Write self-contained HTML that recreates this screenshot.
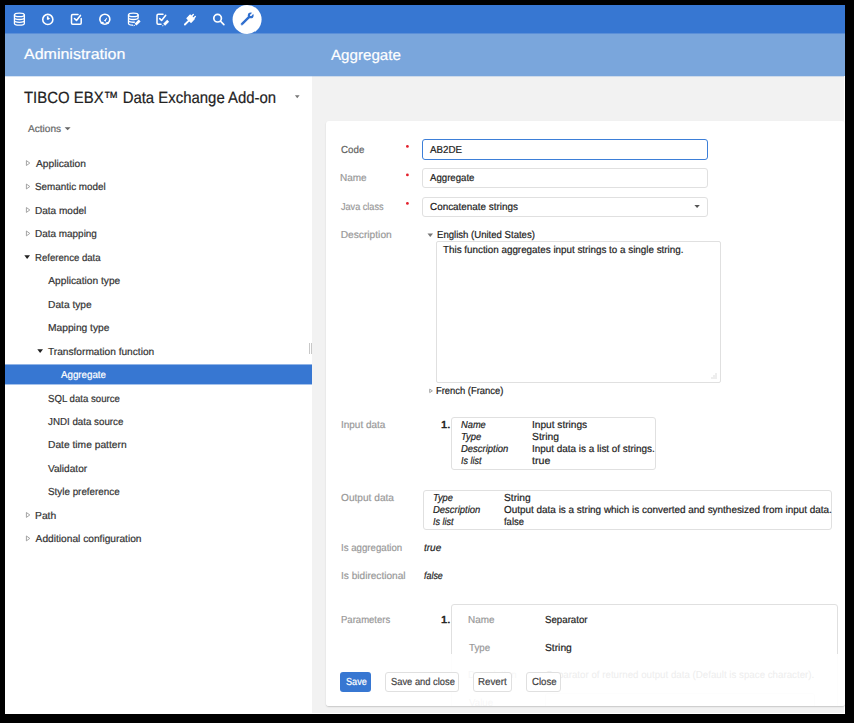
<!DOCTYPE html>
<html><head><meta charset="utf-8"><style>
*{box-sizing:border-box}
html,body{margin:0;padding:0;background:#000;width:854px;height:723px;overflow:hidden;font-family:"Liberation Sans",sans-serif}
.a{position:absolute}
.t{position:absolute;white-space:nowrap;transform-origin:0 0;-webkit-text-stroke:0.2px currentColor;text-rendering:geometricPrecision}
.box{position:absolute;border:1px solid #e0e0e0;border-radius:3px;background:#fff}
.btn{position:absolute;border:1px solid #e0e0e0;border-radius:3px;background:#fff}
</style></head><body>
<div class="a" style="left:5px;top:5px;width:840px;height:29px;background:#3777d2"></div>
<div class="a" style="left:5px;top:33px;width:840px;height:43px;background:#7aa6dc"></div>
<div class="a" style="left:5px;top:33px;width:840px;height:1px;background:#5b8fd8"></div>
<div class="a" style="left:5px;top:76px;width:307px;height:638px;background:#fff"></div>
<div class="a" style="left:312px;top:76px;width:533px;height:638px;background:#f2f2f2"></div>
<div class="a" style="left:5px;top:76px;width:840px;height:1px;background:rgba(122,166,220,.3)"></div>
<div class="a" style="left:844px;top:76px;width:1px;height:638px;background:#fff"></div>
<div class="a" style="left:5px;top:713px;width:840px;height:1px;background:#fff"></div>
<div class="a" style="left:326px;top:121px;width:519px;height:585px;background:#fff;border-radius:3px;box-shadow:0 1px 1.5px rgba(0,0,0,.18)"></div>
<div class="a" style="left:5px;top:365px;width:307px;height:19px;background:#3777d2"></div>
<div class="a" style="left:5px;top:364px;width:307px;height:1px;background:rgba(55,119,210,.55)"></div>
<div class="a" style="left:5px;top:384px;width:307px;height:1px;background:rgba(55,119,210,.45)"></div>
<div class="a" style="left:309px;top:343px;width:1px;height:11px;background:#c8c8c8"></div>
<div class="a" style="left:311px;top:343px;width:1px;height:11px;background:#c8c8c8"></div>
<div class="box" style="left:422px;top:139px;width:286px;height:21px;border:1.5px solid #3d7fd8"></div>
<div class="box" style="left:422px;top:168px;width:286px;height:20px"></div>
<div class="box" style="left:422px;top:197px;width:286px;height:20px"></div>
<div class="box" style="left:436px;top:241px;width:285px;height:142px;border-radius:2px"></div>
<div class="box" style="left:451px;top:417px;width:205px;height:53px"></div>
<div class="box" style="left:423px;top:490px;width:409px;height:40px"></div>
<div class="t" style="left:24.20px;top:48px;font-size:14.9px;line-height:14.9px;color:#fff;transform:scaleX(1.0749)">Administration</div>
<div class="t" style="left:330.70px;top:49px;font-size:14.9px;line-height:14.9px;color:#fff;transform:scaleX(1.0168)">Aggregate</div>
<div class="t" style="left:24.27px;top:90px;font-size:16.3px;line-height:16.3px;color:#222;transform:scaleX(0.9164)">TIBCO EBX™ Data Exchange Add-on</div>
<div class="t" style="left:27.70px;top:125px;font-size:10px;line-height:10px;color:#666;transform:scaleX(1.0092)">Actions</div>
<div class="t" style="left:35.60px;top:160px;font-size:10.2px;line-height:10.2px;color:#333;transform:scaleX(1.0030)">Application</div>
<div class="t" style="left:35.12px;top:183px;font-size:10.2px;line-height:10.2px;color:#333;transform:scaleX(0.9681)">Semantic model</div>
<div class="t" style="left:35.36px;top:207px;font-size:10.2px;line-height:10.2px;color:#333;transform:scaleX(0.9852)">Data model</div>
<div class="t" style="left:35.37px;top:230px;font-size:10.2px;line-height:10.2px;color:#333;transform:scaleX(0.9758)">Data mapping</div>
<div class="t" style="left:34.89px;top:254px;font-size:10.2px;line-height:10.2px;color:#333;transform:scaleX(0.9420)">Reference data</div>
<div class="t" style="left:48.30px;top:277px;font-size:10.2px;line-height:10.2px;color:#333">Application type</div>
<div class="t" style="left:48.05px;top:301px;font-size:10.2px;line-height:10.2px;color:#333">Data type</div>
<div class="t" style="left:47.55px;top:324px;font-size:10.2px;line-height:10.2px;color:#333;transform:scaleX(1.0050)">Mapping type</div>
<div class="t" style="left:48.05px;top:348px;font-size:10.2px;line-height:10.2px;color:#333;transform:scaleX(0.9957)">Transformation function</div>
<div class="t" style="left:61.30px;top:371px;font-size:10.2px;line-height:10.2px;color:#fff;transform:scaleX(0.9561)">Aggregate</div>
<div class="t" style="left:47.83px;top:395px;font-size:10.2px;line-height:10.2px;color:#333;transform:scaleX(0.9462)">SQL data source</div>
<div class="t" style="left:48.30px;top:418px;font-size:10.2px;line-height:10.2px;color:#333;transform:scaleX(0.9580)">JNDI data source</div>
<div class="t" style="left:48.05px;top:441px;font-size:10.2px;line-height:10.2px;color:#333;transform:scaleX(1.0059)">Date time pattern</div>
<div class="t" style="left:48.30px;top:465px;font-size:10.2px;line-height:10.2px;color:#333;transform:scaleX(0.9924)">Validator</div>
<div class="t" style="left:47.82px;top:488px;font-size:10.2px;line-height:10.2px;color:#333;transform:scaleX(0.9666)">Style preference</div>
<div class="t" style="left:34.84px;top:512px;font-size:10.2px;line-height:10.2px;color:#333;transform:scaleX(1.0127)">Path</div>
<div class="t" style="left:35.60px;top:535px;font-size:10.2px;line-height:10.2px;color:#333">Additional configuration</div>
<div class="t" style="left:340.52px;top:146px;font-size:10.2px;line-height:10.2px;color:#666;transform:scaleX(0.9574)">Code</div>
<div class="t" style="left:340.26px;top:174px;font-size:10.2px;line-height:10.2px;color:#999;transform:scaleX(0.9808)">Name</div>
<div class="t" style="left:341.00px;top:203px;font-size:10.2px;line-height:10.2px;color:#999;transform:scaleX(0.8931)">Java class</div>
<div class="t" style="left:340.75px;top:231px;font-size:10.2px;line-height:10.2px;color:#999">Description</div>
<div class="t" style="left:340.77px;top:421px;font-size:10.2px;line-height:10.2px;color:#999;transform:scaleX(0.9788)">Input data</div>
<div class="t" style="left:340.80px;top:494px;font-size:10.2px;line-height:10.2px;color:#999;transform:scaleX(0.9953)">Output data</div>
<div class="t" style="left:340.59px;top:544px;font-size:10.2px;line-height:10.2px;color:#999;transform:scaleX(0.9486)">Is aggregation</div>
<div class="t" style="left:340.56px;top:572px;font-size:10.2px;line-height:10.2px;color:#999;transform:scaleX(0.9914)">Is bidirectional</div>
<div class="t" style="left:340.80px;top:616px;font-size:10.2px;line-height:10.2px;color:#999;transform:scaleX(0.9353)">Parameters</div>
<div class="t" style="left:430.30px;top:146px;font-size:10.2px;line-height:10.2px;color:#222;transform:scaleX(0.9576)">AB2DE</div>
<div class="t" style="left:430.30px;top:174px;font-size:10.2px;line-height:10.2px;color:#222;transform:scaleX(0.9455)">Aggregate</div>
<div class="t" style="left:429.81px;top:203px;font-size:10.2px;line-height:10.2px;color:#222;transform:scaleX(0.9705)">Concatenate strings</div>
<div class="t" style="left:437.00px;top:231px;font-size:10.2px;line-height:10.2px;color:#222;transform:scaleX(0.9398)">English (United States)</div>
<div class="t" style="left:443.46px;top:246px;font-size:10.2px;line-height:10.2px;color:#222;transform:scaleX(0.9649)">This function aggregates input strings to a single string.</div>
<div class="t" style="left:436.21px;top:387px;font-size:10.2px;line-height:10.2px;color:#222;transform:scaleX(0.9226)">French (France)</div>
<div class="t" style="left:441.19px;top:421px;font-size:10.2px;line-height:10.2px;color:#222;-webkit-text-stroke:0.55px currentColor;transform:scaleX(1.0857)">1.</div>
<div class="t" style="left:461.27px;top:421px;font-size:10.2px;line-height:10.2px;color:#222;font-style:italic;transform:scaleX(0.9121)">Name</div>
<div class="t" style="left:532.25px;top:421px;font-size:10.2px;line-height:10.2px;color:#222;transform:scaleX(0.9945)">Input strings</div>
<div class="t" style="left:460.81px;top:433px;font-size:10.2px;line-height:10.2px;color:#222;font-style:italic;transform:scaleX(0.9238)">Type</div>
<div class="t" style="left:531.99px;top:433px;font-size:10.2px;line-height:10.2px;color:#222;transform:scaleX(1.0118)">String</div>
<div class="t" style="left:461.27px;top:445px;font-size:10.2px;line-height:10.2px;color:#222;font-style:italic;transform:scaleX(0.9274)">Description</div>
<div class="t" style="left:532.27px;top:445px;font-size:10.2px;line-height:10.2px;color:#222;transform:scaleX(0.9723)">Input data is a list of strings.</div>
<div class="t" style="left:461.28px;top:457px;font-size:10.2px;line-height:10.2px;color:#222;font-style:italic;transform:scaleX(0.8774)">Is list</div>
<div class="t" style="left:532.30px;top:457px;font-size:10.2px;line-height:10.2px;color:#222;transform:scaleX(1.0435)">true</div>
<div class="t" style="left:432.72px;top:494px;font-size:10.2px;line-height:10.2px;color:#222;font-style:italic;transform:scaleX(0.9095)">Type</div>
<div class="t" style="left:503.70px;top:494px;font-size:10.2px;line-height:10.2px;color:#222;transform:scaleX(1.0039)">String</div>
<div class="t" style="left:433.17px;top:506px;font-size:10.2px;line-height:10.2px;color:#222;font-style:italic;transform:scaleX(0.9274)">Description</div>
<div class="t" style="left:503.71px;top:506px;font-size:10.2px;line-height:10.2px;color:#222;transform:scaleX(0.9746)">Output data is a string which is converted and synthesized from input data.</div>
<div class="t" style="left:433.18px;top:518px;font-size:10.2px;line-height:10.2px;color:#222;font-style:italic;transform:scaleX(0.8817)">Is list</div>
<div class="t" style="left:504.20px;top:518px;font-size:10.2px;line-height:10.2px;color:#222;transform:scaleX(0.9271)">false</div>
<div class="t" style="left:423.51px;top:544px;font-size:10.2px;line-height:10.2px;color:#222;font-style:italic;transform:scaleX(0.9791)">true</div>
<div class="t" style="left:423.78px;top:572px;font-size:10.2px;line-height:10.2px;color:#222;font-style:italic;transform:scaleX(0.8714)">false</div>
<div class="t" style="left:440.98px;top:616px;font-size:10.2px;line-height:10.2px;color:#222;-webkit-text-stroke:0.55px currentColor;transform:scaleX(1.1000)">1.</div>
<div class="a" style="left:0;top:0;width:854px;height:723px;clip-path:inset(0 0 17px 0)">
<div class="box" style="left:451px;top:604px;width:387px;height:130px"></div>
<div class="box" style="left:545px;top:693px;width:270px;height:20px"></div>
<div class="t" style="left:468.17px;top:616px;font-size:10.2px;line-height:10.2px;color:#999;transform:scaleX(0.9731)">Name</div>
<div class="t" style="left:545.22px;top:616px;font-size:10.2px;line-height:10.2px;color:#222;transform:scaleX(0.9514)">Separator</div>
<div class="t" style="left:468.66px;top:644px;font-size:10.2px;line-height:10.2px;color:#999;transform:scaleX(0.9581)">Type</div>
<div class="t" style="left:545.20px;top:644px;font-size:10.2px;line-height:10.2px;color:#222;transform:scaleX(1.0078)">String</div>
<div class="t" style="left:467.98px;top:671px;font-size:10.2px;line-height:10.2px;color:#999;transform:scaleX(0.9550)">Description</div>
<div class="t" style="left:545.92px;top:671px;font-size:10.2px;line-height:10.2px;color:#222;transform:scaleX(0.9550)">Separator of returned output data (Default is space character).</div>
<div class="t" style="left:468.70px;top:699px;font-size:10.2px;line-height:10.2px;color:#999;transform:scaleX(0.9550)">Value</div>
</div>
<svg class="a" style="left:0;top:0" width="854" height="723" viewBox="0 0 854 723">
<g fill="none" stroke="#fff" stroke-width="1.35" stroke-linecap="round" stroke-linejoin="round">
<ellipse cx="19.4" cy="14.9" rx="4.95" ry="1.8"/>
<path d="M14.45 14.9V23.4A4.95 1.8 0 0 0 24.35 23.4V14.9M14.45 17.7A4.95 1.8 0 0 0 24.35 17.7M14.45 20.5A4.95 1.8 0 0 0 24.35 20.5"/>
<circle cx="47.8" cy="19.45" r="5.05" stroke-width="1.6"/>
<path d="M78 14.5H72.7Q71.5 14.5 71.5 15.7V23Q71.5 24.2 72.7 24.2H80Q81.2 24.2 81.2 23V18.4" stroke-width="1.5"/>
<path d="M74.5 18.5L76.5 20.5L80.4 15.4" stroke-width="1.6"/>
<circle cx="104.85" cy="19.2" r="5.0" stroke-width="1.6"/>
<path d="M101.3 23.1Q102.6 22.2 103.2 22.9M106.4 22.9Q107.1 22.2 108.4 23.1" stroke-width="1.4"/>
<ellipse cx="133.3" cy="14.9" rx="4.8" ry="1.8"/>
<path d="M128.5 14.9V23.4A4.8 1.8 0 0 0 132.5 25.2M138.1 14.9V18M128.5 17.7A4.8 1.8 0 0 0 138.1 17.7M128.5 20.5A4.8 1.8 0 0 0 134.5 22.2"/>
<path d="M163 14.35H158.2Q157 14.35 157 15.55V23Q157 24.2 158.2 24.2H161" stroke-width="1.5"/>
<path d="M159.7 18.6L161.6 20.45L165.7 15.35" stroke-width="1.6"/>
<path d="M184.9 24.5L189.1 20.3" stroke-width="1.9"/>
<path d="M191.5 16.4L193.3 14.6M193.5 18.4L195.3 16.6" stroke-width="1.4"/>
<circle cx="217.6" cy="18.2" r="3.8" stroke-width="1.7"/>
<path d="M220.7 21.4L223.9 24.6" stroke-width="1.6"/>
</g>
<g fill="#fff">
<path d="M46.9 16.2H48.3L48.8 17.9L50.3 18.5L48.4 19.8H46.9Z"/>
<path d="M105.08 22.58L107.11 18.04L106.69 17.76L103.32 21.42A1.05 1.05 0 0 1 105.08 22.58Z"/>
<path d="M134.6 23.7L138.7 19.6L140.6 21.5L136.5 25.6Z M133.3 26.2L134.1 24.8L135.2 25.8Z"/>
<path d="M163.2 23.8L167.2 19.8L169.1 21.7L165.1 25.7Z M162 26.3L162.7 24.9L163.8 25.9Z"/>
<path d="M186.9 18.4L190.2 15.0L194.3 18.9L191 22.4Z" stroke="#fff" stroke-width="1.1" stroke-linejoin="round"/>
<circle cx="247.1" cy="19.4" r="14.5"/>
</g>
<g fill="#2f6fcf">
<path d="M241.9 24.2L249.2 16.9" stroke="#2f6fcf" stroke-width="2.4" stroke-linecap="round"/>
<circle cx="250.7" cy="15.4" r="2.9"/>
</g>
<g fill="#fff">
<path d="M250.24 14.66L252.57 12.33L253.77 13.53L251.44 15.86Z"/>
<circle cx="250.84" cy="15.26" r="0.85"/>
</g>
<circle cx="241.9" cy="24.2" r="0.5" fill="#9cbcea"/>
<!-- nav triangles -->
<g fill="none" stroke="#9a9a9a" stroke-width="0.9" stroke-linejoin="round">
<path d="M26.4 160.6V165.5L29.8 163.05Z"/>
<path d="M26.4 184.06V188.96L29.8 186.51Z"/>
<path d="M26.4 207.52V212.42L29.8 209.97Z"/>
<path d="M26.4 230.98V235.88L29.8 233.43Z"/>
<path d="M26.4 512.5V517.4L29.8 514.95Z"/>
<path d="M26.4 535.96V540.86L29.8 538.41Z"/>
<path d="M429.7 389.1V392.6L432.4 390.85Z"/>
</g>
<g fill="#222">
<path d="M24.3 255.3H30L27.15 259Z"/>
<path d="M37.3 349.3H43L40.15 353Z"/>
</g>
<path d="M427.5 233.6H433L430.25 236.9Z" fill="#777"/>
<path d="M64.6 127.3H70.6L67.6 130.3Z" fill="#666"/>
<path d="M294.9 95.3H299.6L297.25 98.3Z" fill="#777"/>
<path d="M694.4 205.1H699.8L697.1 208Z" fill="#555"/>
<g fill="#e3202c">
<circle cx="407.4" cy="146.4" r="1.4"/>
<circle cx="407.4" cy="174.9" r="1.4"/>
<circle cx="407.4" cy="203.4" r="1.4"/>
</g>
<g fill="#bbb">
<rect x="715.5" y="373.5" width="1" height="1"/>
<rect x="713.5" y="375.5" width="1" height="1"/><rect x="715.5" y="375.5" width="1" height="1"/>
<rect x="711.5" y="377.5" width="1" height="1"/><rect x="713.5" y="377.5" width="1" height="1"/><rect x="715.5" y="377.5" width="1" height="1"/>
</g>
</svg>

<div class="a" style="left:326px;top:654px;width:519px;height:52px;background:rgba(255,255,255,.92);border-radius:0 0 3px 3px"></div>
<div class="a" style="left:340px;top:672px;width:31px;height:20px;background:#3777d2;border-radius:3px"></div>
<div class="btn" style="left:385px;top:672px;width:74px;height:20px"></div>
<div class="btn" style="left:473px;top:672px;width:39px;height:20px"></div>
<div class="btn" style="left:526px;top:672px;width:35px;height:20px"></div>
<div class="t" style="left:345.65px;top:678px;font-size:10.2px;line-height:10.2px;color:#fff;transform:scaleX(0.8933)">Save</div>
<div class="t" style="left:390.74px;top:678px;font-size:10.2px;line-height:10.2px;color:#444;transform:scaleX(0.9178)">Save and close</div>
<div class="t" style="left:478.28px;top:678px;font-size:10.2px;line-height:10.2px;color:#444;transform:scaleX(0.9573)">Revert</div>
<div class="t" style="left:531.53px;top:678px;font-size:10.2px;line-height:10.2px;color:#444;transform:scaleX(0.9465)">Close</div>
</body></html>
